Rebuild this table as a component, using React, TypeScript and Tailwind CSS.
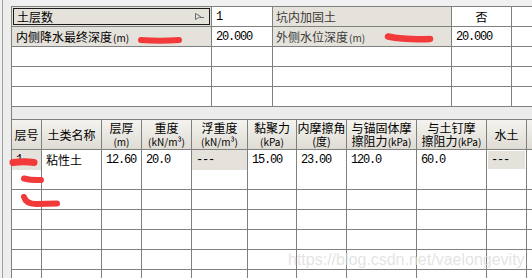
import React from 'react';

const cjk = "font-['Noto_Sans_CJK_SC',sans-serif]";
const mono = "font-['Liberation_Mono',monospace] text-[12px] tracking-[-1.2px]";
const line = 'border-[#808080]';

type ParamRow = {
  l1?: string;
  u1?: string;
  v1?: string;
  l2?: string;
  u2?: string;
  v2?: string;
  focus?: boolean;
};

const params: ParamRow[] = [
  { l1: '土层数', v1: '1', l2: '坑内加固土', v2: '否', focus: true },
  { l1: '内侧降水最终深度', u1: '(m)', v1: '20.000', l2: '外侧水位深度', u2: '(m)', v2: '20.000' },
  {},
  {},
  {},
];

const columns = [
  { t: '层号' },
  { t: '土类名称' },
  { t: '层厚', s: '(m)' },
  { t: '重度', s: '(kN/m³)' },
  { t: '浮重度', s: '(kN/m³)' },
  { t: '黏聚力', s: '(kPa)' },
  { t: '内摩擦角', s: '(度)' },
  { t: '与锚固体摩', m: '擦阻力', s: '(kPa)' },
  { t: '与土钉摩', m: '擦阻力', s: '(kPa)' },
  { t: '水土' },
  { t: '' },
];

const layers = [['1', '粘性土', '12.60', '20.0', '---', '15.00', '23.00', '120.0', '60.0', '---', '']];

// 每行 11 列：序号列与只读列为灰底
const readonly = [0, 4];

function RowArrow() {
  return (
    <svg width="9" height="7" viewBox="0 0 9 7" className="ml-auto mr-[5px] shrink-0">
      <polygon points="0.5,0.5 5.5,3.5 0.5,6.5" fill="#e8e8e8" stroke="#6a6a6a" strokeWidth="1" />
      <line x1="5" y1="4.5" x2="9" y2="4.5" stroke="#6a6a6a" strokeWidth="1" />
    </svg>
  );
}

function ParamLabel({ text, unit, muted }: { text?: string; unit?: string; muted?: boolean }) {
  if (!text) return null;
  return (
    <span className={`${cjk} text-[12px] leading-none ${muted ? 'text-[#3a3a3a]' : 'text-black'}`}>
      {text}
      {unit && <span className="text-[10px] ml-px">{unit}</span>}
    </span>
  );
}

function ParamTable() {
  return (
    <div className={`border-t ${line}`}>
      {params.map((r, i) => {
        const filled = !!r.l1;
        return (
          <div key={i} className="grid grid-cols-[200px_61px_179px_60px_1fr] h-[20px]">
            <div className={`border-r border-b ${line} ${filled ? 'bg-[#e5e2db]' : 'bg-white'} ${r.focus ? 'p-px' : 'flex items-center pl-[4px]'}`}>
              {r.focus ? (
                <div className="h-full border border-[#1a1a1a] flex items-center pl-[3px]">
                  <ParamLabel text={r.l1} />
                  <RowArrow />
                </div>
              ) : (
                <ParamLabel text={r.l1} unit={r.u1} />
              )}
            </div>
            <div className={`border-r border-b ${line} bg-white flex items-center pl-[4px] ${mono} text-black`}>
              {r.v1}
            </div>
            <div className={`border-r border-b ${line} ${filled ? 'bg-[#e5e2db]' : 'bg-white'} flex items-center pl-[3px]`}>
              <ParamLabel text={r.l2} unit={r.u2} muted />
            </div>
            <div
              className={`border-r border-b ${line} bg-white flex items-center ${
                r.v2 === '否' ? `justify-center ${cjk} text-[12px]` : `pl-[4px] ${mono}`
              } text-black`}
            >
              {r.v2}
            </div>
            <div className={`border-b ${line} bg-white`} />
          </div>
        );
      })}
    </div>
  );
}

function LayerTable() {
  const empty = Array.from({ length: 6 }, () => columns.map(() => ''));
  return (
    <div className={`border-t ${line}`}>
      <div className="grid grid-cols-[30px_60px_40px_50px_56px_49px_50px_70px_70px_40px_1fr] h-[30px]">
        {columns.map((c, i) => (
          <div
            key={i}
            className={`border-b ${i < 10 ? 'border-r' : ''} ${line} bg-linear-to-b from-[#f4f3ef] to-[#dfdcd4] flex flex-col items-center justify-center ${cjk} text-black text-[12px] leading-[13px] whitespace-nowrap`}
          >
            <span>{c.t}</span>
            {c.s && (
              <span className="leading-[13px]">
                {c.m}
                <span className={c.s === '(度)' ? 'text-[11px]' : 'text-[10px]'}>{c.s}</span>
              </span>
            )}
          </div>
        ))}
      </div>
      {[...layers, ...empty].map((row, r) => (
        <div key={r} className="grid grid-cols-[30px_60px_40px_50px_56px_49px_50px_70px_70px_40px_1fr] h-[20px]">
          {row.map((v, i) => {
            const grey = r < layers.length && readonly.includes(i);
            const inset = r < layers.length && i === 9;
            const isText = i === 1;
            return (
              <div
                key={i}
                className={`border-b ${i < 10 ? 'border-r' : ''} ${line} ${grey ? 'bg-[#e5e2db]' : 'bg-white'} ${inset ? 'p-px' : ''} flex items-center text-black`}
              >
                {inset ? (
                  <div className={`h-full w-full bg-[#e5e2db] flex items-center pl-[3px] ${mono}`}>{v}</div>
                ) : (
                  <span className={`pl-[4px] ${isText ? `${cjk} text-[12px]` : mono}`}>{v}</span>
                )}
              </div>
            );
          })}
        </div>
      ))}
    </div>
  );
}

// 截图上的红色涂抹标记
function Marks() {
  return (
    <svg width="532" height="278" className="absolute inset-0 pointer-events-none">
      <g stroke="#f23a3a" strokeLinecap="round" fill="none">
        <path d="M141 40 Q160 41.5 179 40" strokeWidth="6" />
        <path d="M388 36.5 Q405 40 430 39" strokeWidth="6.5" />
        <path d="M13 162.5 Q24 161 34 162.5" strokeWidth="7" />
        <path d="M24 178.5 Q32 180.5 41 180" strokeWidth="6" />
        <path d="M24 197 Q26 204 36 204 L57 203.5" strokeWidth="6" />
      </g>
    </svg>
  );
}

export default function App() {
  return (
    <div className="relative w-[532px] h-[278px] overflow-hidden bg-[#f0f0f0] flex">
      <div className="w-[2px] bg-[#f0f0f0]" />
      <div className="w-px bg-[#a0a0a0]" />
      <div className="w-[8px] bg-[#ededed]" />
      <div className="flex-1 flex flex-col">
        <div className="h-[6px] bg-[#f0f0f0] shrink-0" />
        <div className={`flex-1 border-l ${line} flex flex-col`}>
          <ParamTable />
          <div className="h-[12px] bg-[#ececec] shrink-0" />
          <LayerTable />
        </div>
      </div>
      <Marks />
      <div className="absolute left-[288px] top-[248px] font-['Liberation_Sans',sans-serif] text-[16px] text-[#dcdcdc]/80 pointer-events-none whitespace-nowrap">
        https://blog.csdn.net/vaelongevity
      </div>
    </div>
  );
}
